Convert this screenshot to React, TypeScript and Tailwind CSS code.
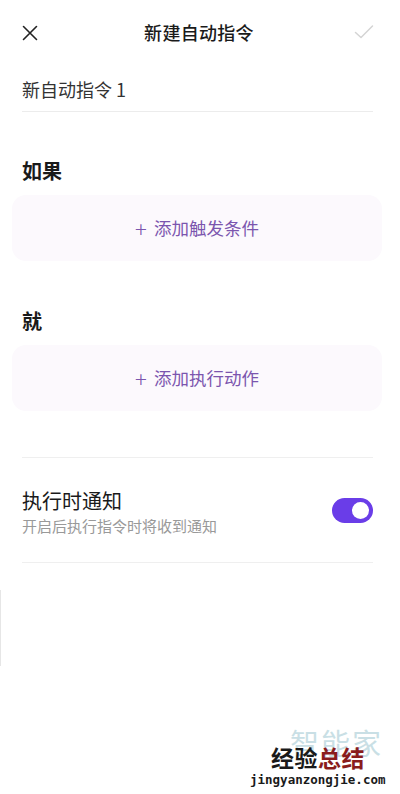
import React from "react";

export default function App() {
  const font = { fontFamily: '"Noto Sans CJK SC", "Noto Sans", sans-serif' };
  return (
    <div className="relative w-[400px] h-[794px] bg-white overflow-hidden text-[#1a1a1a]" style={font}>
      {/* Header */}
      <div className="flex items-center justify-between h-[64px] pl-[22px] pr-[26px]">
        <svg width="16" height="16" viewBox="0 0 16 16" className="mt-[1px]">
          <path d="M1.5 1.5 L14.5 14.5 M14.5 1.5 L1.5 14.5" stroke="#222" strokeWidth="1.6" strokeLinecap="round" />
        </svg>
        <div className="text-[18px] font-medium leading-none tracking-[0.3px] ml-[6px]">新建自动指令</div>
        <svg width="20" height="16" viewBox="0 0 20 16">
          <path d="M1.5 8.5 L7 13.5 L18.5 2" stroke="#d4d4d4" strokeWidth="1.5" fill="none" strokeLinecap="round" strokeLinejoin="round" />
        </svg>
      </div>

      {/* Name input */}
      <div className="ml-[22px] mr-[27px] mt-[11px] pb-[8px] border-b border-[#ececec]">
        <div className="text-[18px] leading-[28px] text-[#333]">新自动指令 1</div>
      </div>

      {/* If */}
      <div className="px-[22px] mt-[44px] text-[20px] font-bold leading-[30px]">如果</div>
      <div className="ml-[12px] mr-[18px] mt-[9px] h-[66px] rounded-[14px] bg-[#fcf9fd] flex items-center justify-center text-[17.5px] text-[#7b55ae]">
        <span className="mr-[7px] text-[22px] font-light leading-none">+</span>
        <span>添加触发条件</span>
      </div>

      {/* Then */}
      <div className="px-[22px] mt-[45px] text-[20px] font-bold leading-[30px]">就</div>
      <div className="ml-[12px] mr-[18px] mt-[9px] h-[66px] rounded-[14px] bg-[#fcf9fd] flex items-center justify-center text-[17.5px] text-[#7b55ae]">
        <span className="mr-[7px] text-[22px] font-light leading-none">+</span>
        <span>添加执行动作</span>
      </div>

      {/* Divider */}
      <div className="ml-[22px] mr-[27px] mt-[46px] border-t border-[#efefef]" />

      {/* Notify row */}
      <div className="ml-[22px] mr-[27px] flex items-center justify-between pt-[29px] pb-[25px] border-b border-[#efefef]">
        <div>
          <div className="text-[20px] leading-[28px] text-[#1a1a1a]">执行时通知</div>
          <div className="text-[15px] leading-[22px] text-[#999]">开启后执行指令时将收到通知</div>
        </div>
        <div className="w-[41px] h-[25px] rounded-full bg-[#6a3de8] flex items-center justify-end pr-[4px] mt-[-4px]">
          <div className="w-[17px] h-[17px] rounded-full bg-white" />
        </div>
      </div>

      {/* faint left edge line */}
      <div className="absolute left-0 top-[590px] w-[1px] h-[76px] bg-[#e6e6e6]" />

      {/* Watermark */}
      <div className="absolute left-[290px] top-[728px] text-[29px] leading-none text-[#c9dfe5] tracking-[2px]">智能家</div>
      <div className="absolute left-[271px] top-[746px] text-[23px] font-bold leading-none tracking-[0.5px]">
        <span className="text-[#1a1a1a]">经验</span>
        <span className="text-[#8a1c1c]">总结</span>
      </div>
      <div className="absolute left-[250px] top-[774px] text-[12.5px] leading-none text-[#1a1a1a] font-bold" style={{ fontFamily: '"DejaVu Sans Mono", monospace' }}>
        jingyanzongjie.com
      </div>
    </div>
  );
}
